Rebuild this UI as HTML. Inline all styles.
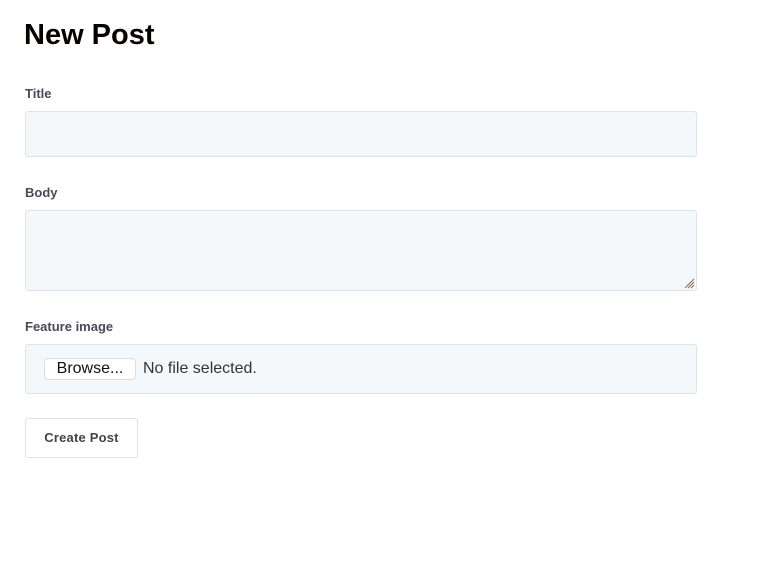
<!DOCTYPE html>
<html><head><style>
body{margin:0;background:#fff;font-family:"Liberation Sans",sans-serif;}
.abs{position:absolute;}
h1{position:absolute;left:24px;top:19px;margin:0;font-size:29px;font-weight:bold;color:#0a0000;letter-spacing:0;}
.lbl{position:absolute;left:25px;font-size:13px;font-weight:bold;color:#4a4a5a;}
.box{position:absolute;left:25px;width:670px;background:#f5f8fb;border:1px solid #dde3ea;border-radius:3px;}
</style></head><body>
<h1>New Post</h1>
<div class="lbl" style="top:86px">Title</div>
<div class="box" style="top:111px;height:44px"></div>
<div class="lbl" style="top:185px">Body</div>
<div class="box" style="top:210px;height:79px">
<svg class="abs" style="right:1px;bottom:1px" width="12" height="12"><path d="M11 2L2 11M11 5L5 11M11 8L8 11" stroke="#8a6a50" stroke-width="1"/></svg>
</div>
<div class="lbl" style="top:319px">Feature image</div>
<div class="box" style="top:344px;height:48px">
<div class="abs" style="left:18px;top:13px;width:90px;height:20px;background:#fff;border:1px solid #d8dde3;border-radius:4px;font-size:16px;color:#111;text-align:center;line-height:20px;">Browse...</div>
<div class="abs" style="left:117px;top:13px;font-size:16px;color:#333;line-height:22px;">No file selected.</div>
</div>
<div class="abs" style="left:25px;top:418px;width:111px;height:38px;border:1px solid #dde3ea;border-radius:3px;font-size:13px;font-weight:bold;color:#444;text-align:center;line-height:38px;letter-spacing:0.2px;">Create Post</div>
</body></html>
